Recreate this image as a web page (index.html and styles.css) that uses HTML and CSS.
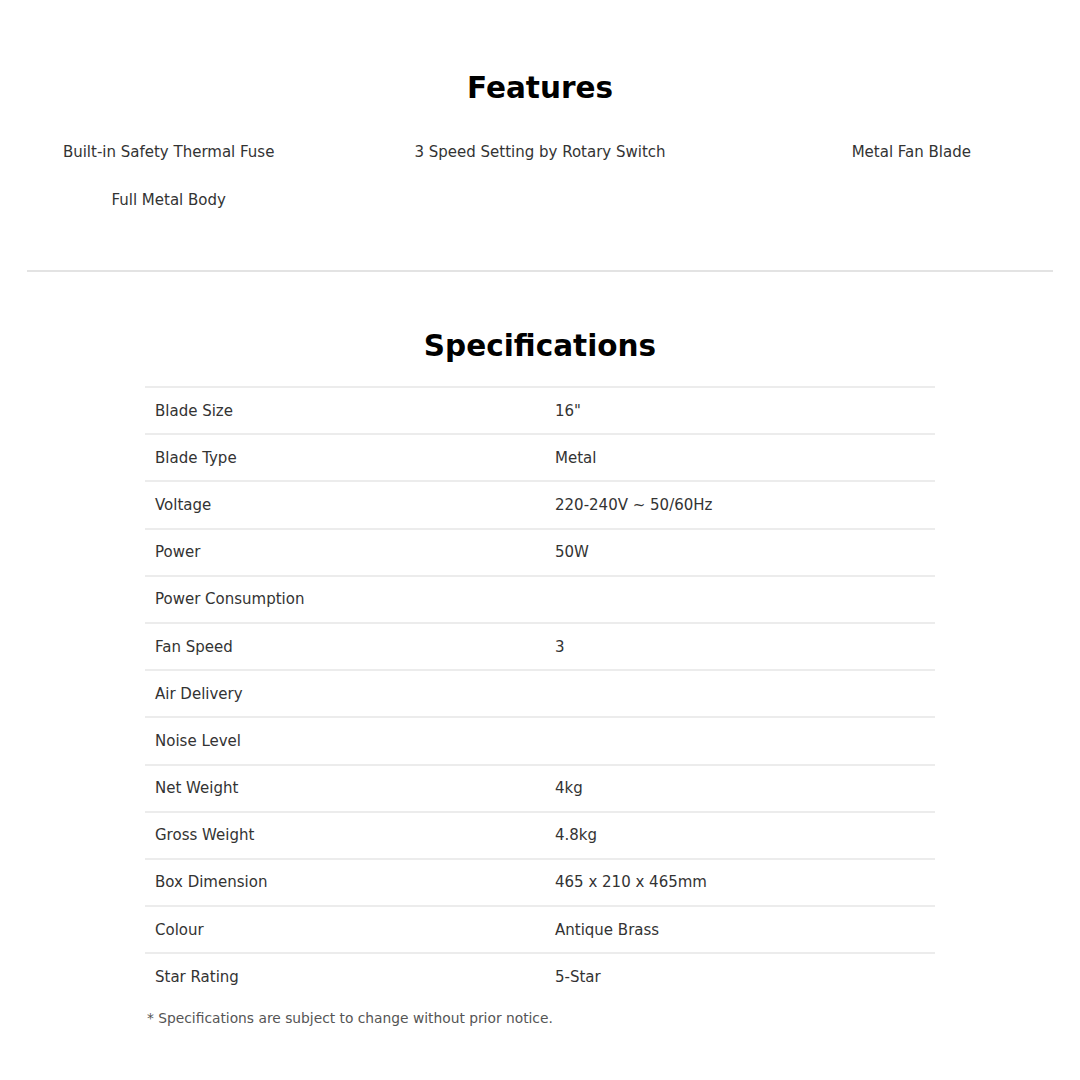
FILE: index.html
```html
<!DOCTYPE html>
<html>
<head>
<meta charset="utf-8">
<link rel="stylesheet" href="styles.css">
</head>
<body>
<main class="page">
  <section class="features">
    <h2 class="title">Features</h2>
    <ul class="feature-grid">
      <li>Built-in Safety Thermal Fuse</li>
      <li>3 Speed Setting by Rotary Switch</li>
      <li>Metal Fan Blade</li>
      <li>Full Metal Body</li>
    </ul>
  </section>
  <hr class="divider">
  <section class="specs">
    <h2 class="title">Specifications</h2>
    <table class="spec-table">
      <tbody>
        <tr><td>Blade Size</td><td>16"</td></tr>
        <tr><td>Blade Type</td><td>Metal</td></tr>
        <tr><td>Voltage</td><td>220-240V ~ 50/60Hz</td></tr>
        <tr><td>Power</td><td>50W</td></tr>
        <tr><td>Power Consumption</td><td></td></tr>
        <tr><td>Fan Speed</td><td>3</td></tr>
        <tr><td>Air Delivery</td><td></td></tr>
        <tr><td>Noise Level</td><td></td></tr>
        <tr><td>Net Weight</td><td>4kg</td></tr>
        <tr><td>Gross Weight</td><td>4.8kg</td></tr>
        <tr><td>Box Dimension</td><td>465 x 210 x 465mm</td></tr>
        <tr><td>Colour</td><td>Antique Brass</td></tr>
        <tr><td>Star Rating</td><td>5-Star</td></tr>
      </tbody>
    </table>
    <p class="note">* Specifications are subject to change without prior notice.</p>
  </section>
</main>
</body>
</html>
```

FILE: styles.css
```css
* { box-sizing: border-box; }
html, body { margin: 0; padding: 0; background: #fff; }
body {
  font-family: "DejaVu Sans", "Liberation Sans", sans-serif;
  color: #333;
  font-size: 15px;
}
.page { width: 1080px; padding-top: 66px; }
.title {
  margin: 0;
  text-align: center;
  font-family: "DejaVu Sans", sans-serif;
  font-weight: 700;
  font-size: 29.5px;
  line-height: 44px;
  color: #000;
}
.feature-grid {
  list-style: none;
  margin: 18px 0 0;
  padding: 0;
  display: grid;
  grid-template-columns: repeat(3, 1fr);
  column-gap: 34px;
  row-gap: 0;
}
.feature-grid li {
  text-align: center;
  line-height: 48px;
  height: 48px;
}
.divider {
  margin: 46px 27px 0;
  border: 0;
  border-top: 2px solid #e3e3e3;
}
.specs { padding-top: 52px; }
.spec-table {
  margin: 18px auto 0;
  width: 790px;
  border-collapse: collapse;
}
.spec-table tr { border-top: 2px solid #ececec; }
.spec-table td {
  height: 47.2px;
  padding: 0 10px;
  vertical-align: middle;
}
.spec-table td:first-child { width: 400px; }
.note {
  margin: 10px 0 0 147px;
  font-size: 13.8px;
  color: #555;
}
```
